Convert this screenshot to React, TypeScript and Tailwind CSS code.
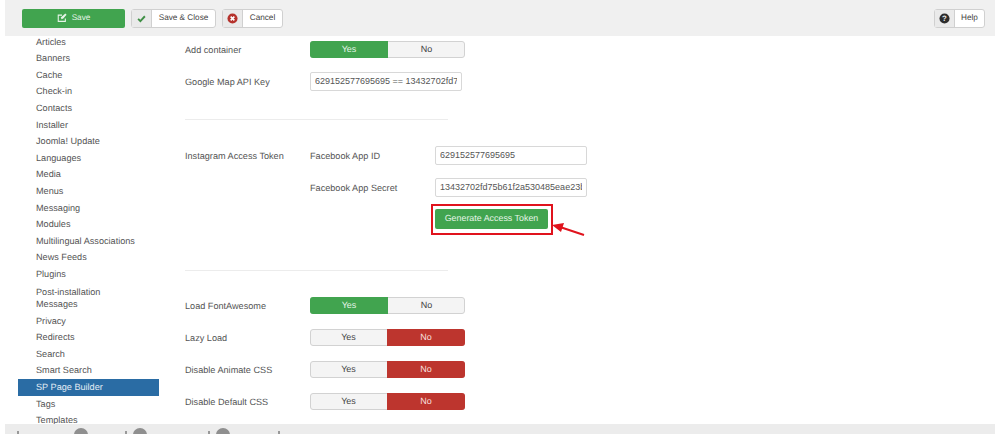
import React from "react";

const menuItems = [
  "Articles",
  "Banners",
  "Cache",
  "Check-in",
  "Contacts",
  "Installer",
  "Joomla! Update",
  "Languages",
  "Media",
  "Menus",
  "Messaging",
  "Modules",
  "Multilingual Associations",
  "News Feeds",
  "Plugins",
  "Post-installation Messages",
  "Privacy",
  "Redirects",
  "Search",
  "Smart Search",
  "SP Page Builder",
  "Tags",
  "Templates",
];

function ToolButton({
  icon,
  label,
  width,
}: {
  icon: React.ReactNode;
  label: string;
  width: string;
}) {
  return (
    <div className={`flex h-[19px] items-stretch rounded-[3px] border border-[#d0d0d0] bg-white text-[8.2px] text-[#444] ${width}`}>
      <span className="flex w-[20px] items-center justify-center border-r border-[#d0d0d0] bg-[#eaeaea]">
        {icon}
      </span>
      <span className="flex flex-1 items-center justify-center">{label}</span>
    </div>
  );
}

function Toggle({ value }: { value: "yes" | "no" }) {
  const yes = value === "yes";
  return (
    <div className="flex h-[17px] w-[155px] rounded-[3px] border border-[#d2d2d2] bg-[#f4f4f4] text-[9px] leading-none">
      <span
        className={`-my-px -ml-px flex items-center justify-center rounded-l-[3px] ${
          yes ? "w-[78px] bg-[#41a44f] text-[#e6f4e8]" : "w-[77px] text-[#444]"
        }`}
      >
        Yes
      </span>
      <span
        className={`-my-px -mr-px flex flex-1 items-center justify-center rounded-r-[3px] ${
          yes ? "text-[#444]" : "bg-[#bd352e] text-[#f6dedc]"
        }`}
      >
        No
      </span>
    </div>
  );
}

function ToggleRow({ label, value }: { label: string; value: "yes" | "no" }) {
  return (
    <div className="flex h-[32px] items-center">
      <span className="mt-[3px] w-[125px]">{label}</span>
      <Toggle value={value} />
    </div>
  );
}

function TextField({ value, width }: { value: string; width: string }) {
  return (
    <input
      readOnly
      value={value}
      className={`h-[19px] rounded-[2px] border border-[#d8d8d8] bg-white px-[4px] text-[9px] text-[#555] outline-none ${width}`}
    />
  );
}

export default function App() {
  return (
    <div className="relative flex h-[434px] w-[1000px] flex-col overflow-hidden bg-white font-['Liberation_Sans',Arial,sans-serif] text-[9.15px] text-[#555] [text-rendering:geometricPrecision]">
      <div className="z-10 mx-[5px] flex h-[36px] shrink-0 items-center bg-[#f0f0f0] pl-[17px] pr-[10px]">
        <div className="flex h-[19px] w-[103px] items-center justify-center gap-[5px] rounded-[2px] bg-[#41a44f] text-[8.2px] text-[#e6f4e8]">
          <svg width="10" height="10" viewBox="0 0 24 24" fill="none" stroke="#e6f4e8" strokeWidth="2.6">
            <path d="M20 13v7H3V5h9" />
            <path d="M9 11l2 4 4-2 8-9-3-3z" fill="#e6f4e8" stroke="none" />
          </svg>
          Save
        </div>
        <div className="ml-[6px]">
          <ToolButton
            width="w-[85px]"
            label="Save & Close"
            icon={
              <svg width="9" height="9" viewBox="0 0 24 24" fill="none" stroke="#3f8f45" strokeWidth="5">
                <path d="M3 13l6 6L21 6" />
              </svg>
            }
          />
        </div>
        <div className="ml-[6px]">
          <ToolButton
            width="w-[61px]"
            label="Cancel"
            icon={
              <svg width="11" height="11" viewBox="0 0 24 24">
                <circle cx="12" cy="12" r="11" fill="#b5322c" />
                <path d="M8 8l8 8M16 8l-8 8" stroke="#fff" strokeWidth="3.5" />
              </svg>
            }
          />
        </div>
        <div className="ml-auto">
          <ToolButton
            width="w-[51px]"
            label="Help"
            icon={
              <svg width="11" height="11" viewBox="0 0 24 24">
                <circle cx="12" cy="12" r="11" fill="#2c2c2c" />
                <text x="12" y="18" textAnchor="middle" fontSize="17" fontWeight="700" fill="#eee" fontFamily="Liberation Sans">
                  ?
                </text>
              </svg>
            }
          />
        </div>
      </div>

      <div className="flex min-h-0 flex-1">
        <div className="ml-[18px] w-[141px] shrink-0">
          <ul className="-mt-[2.5px]">
            {menuItems.map((item) => {
              const active = item === "SP Page Builder";
              const twoLine = item.startsWith("Post");
              return (
                <li
                  key={item}
                  className={`pl-[18px] ${
                    twoLine ? "py-[3px] pr-[40px] leading-[12px]" : "h-[16.62px] leading-[16.62px]"
                  } ${active ? "bg-[#2a6ca4] text-[#e3edf5]" : ""}`}
                >
                  {item}
                </li>
              );
            })}
          </ul>
        </div>

        <div className="-mt-[3px] ml-[26px] w-[500px]">
          <ToggleRow label="Add container" value="yes" />
          <div className="flex h-[32px] items-center">
            <span className="mt-[3px] w-[125px]">Google Map API Key</span>
            <TextField width="w-[152px]" value="629152577695695 == 13432702fd75b61f2a530485eae23b8c" />
          </div>

          <div className="mt-[22px] h-px w-[263px] bg-[#ececec]" />

          <div className="mt-[19px] flex">
            <span className="flex h-[32px] w-[125px] items-center pt-[3px]">Instagram Access Token</span>
            <div>
              <div className="flex h-[32px] items-center">
                <span className="mt-[3px] w-[125px]">Facebook App ID</span>
                <TextField width="w-[152px]" value="629152577695695" />
              </div>
              <div className="flex h-[32px] items-center">
                <span className="mt-[3px] w-[125px]">Facebook App Secret</span>
                <TextField width="w-[152px]" value="13432702fd75b61f2a530485eae23b8c" />
              </div>
              <div className="ml-[125px] mt-[6px] flex h-[20px] w-[113px] items-center justify-center rounded-[2px] bg-[#41a44f] text-[8.9px] text-[#e6f4e8]">
                Generate Access Token
              </div>
            </div>
          </div>

          <div className="mt-[41px] h-px w-[263px] bg-[#ececec]" />

          <div className="mt-[18px]">
            <ToggleRow label="Load FontAwesome" value="yes" />
            <ToggleRow label="Lazy Load" value="no" />
            <ToggleRow label="Disable Animate CSS" value="no" />
            <ToggleRow label="Disable Default CSS" value="no" />
          </div>
        </div>
      </div>

      <div className="z-10 mx-[5px] flex h-[10px] shrink-0 items-start overflow-hidden bg-[#ececec] pt-[4px]">
        <span className="ml-[12px] mt-[3px] h-[3px] w-[2px] bg-[#999]" />
        <span className="ml-[55px] h-[14px] w-[14px] rounded-full bg-[#8f8f8f]" />
        <span className="ml-[37px] mt-[3px] h-[3px] w-[2px] bg-[#999]" />
        <span className="ml-[6px] h-[14px] w-[14px] rounded-full bg-[#8f8f8f]" />
        <span className="ml-[61px] mt-[3px] h-[3px] w-[2px] bg-[#999]" />
        <span className="ml-[6px] h-[14px] w-[14px] rounded-full bg-[#8f8f8f]" />
        <span className="ml-[48px] mt-[3px] h-[3px] w-[2px] bg-[#999]" />
      </div>

      <div className="absolute left-[431px] top-[204px] h-[31px] w-[122px] border-2 border-[#e0131d]" />
      <svg className="absolute left-[550px] top-[220px]" width="38" height="20" viewBox="0 0 38 20" fill="none">
        <path d="M34 15L10 7" stroke="#e0131d" strokeWidth="2" />
        <path d="M2 5l12-2-3 9z" fill="#e0131d" />
      </svg>
    </div>
  );
}
